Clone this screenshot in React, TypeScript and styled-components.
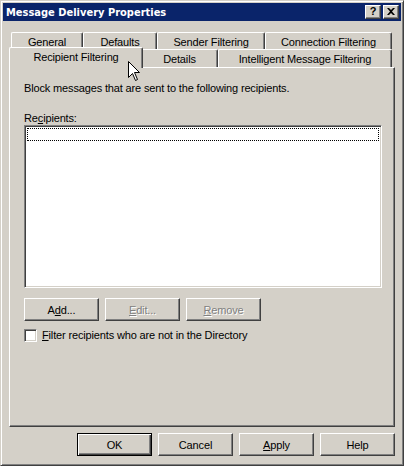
import styled, { createGlobalStyle } from "styled-components";

const GlobalStyle = createGlobalStyle`
  html, body {
    margin: 0;
    padding: 0;
    background: #d4d0c8;
  }
  * {
    box-sizing: border-box;
  }
`;

const FACE = "#d4d0c8";
const SHADOW = "#808080";
const DARK = "#404040";
const FONT = `"Liberation Sans", Arial, sans-serif`;

export default function App() {
  return (
    <>
      <GlobalStyle />
      <Window>
        <TitleBar>
          <Title>Message Delivery Properties</Title>
          <CaptionButtons>
            <CaptionButton aria-label="Help">?</CaptionButton>
            <CaptionButton aria-label="Close">
              <svg width="8" height="7" viewBox="0 0 8 7">
                <path d="M0 0 L2 0 L4 2 L6 0 L8 0 L5 3.5 L8 7 L6 7 L4 5 L2 7 L0 7 L3 3.5 Z" fill="#000" />
              </svg>
            </CaptionButton>
          </CaptionButtons>
        </TitleBar>

        <Body>
          <TabStrip>
            <TabRow>
              <Tab $w={72}>General</Tab>
              <Tab $w={74}>Defaults</Tab>
              <Tab $w={108}>Sender Filtering</Tab>
              <Tab $w={127}>Connection Filtering</Tab>
            </TabRow>
            <TabRow>
              <Tab $w={130} $active>Recipient Filtering</Tab>
              <Tab $w={77}>Details</Tab>
              <Tab $w={174}>Intelligent Message Filtering</Tab>
            </TabRow>
          </TabStrip>

          <Panel>
            <Intro>Block messages that are sent to the following recipients.</Intro>
            <FieldLabel>
              Re<u>c</u>ipients:
            </FieldLabel>
            <ListBox>
              <FocusRow />
            </ListBox>
            <ButtonRow>
              <Button>
                A<u>d</u>d...
              </Button>
              <Button disabled>
                <u>E</u>dit...
              </Button>
              <Button disabled>
                <u>R</u>emove
              </Button>
            </ButtonRow>
            <CheckRow>
              <CheckBox />
              <span>
                <u>F</u>ilter recipients who are not in the Directory
              </span>
            </CheckRow>
          </Panel>

          <DialogButtons>
            <Button $default>OK</Button>
            <Button>Cancel</Button>
            <Button>
              <u>A</u>pply
            </Button>
            <Button>Help</Button>
          </DialogButtons>
        </Body>

        <Pointer width="13" height="21" viewBox="0 0 13 21">
          <path
            d="M0.5 0.5 L0.5 16.5 L4.5 12.5 L7.5 19.5 L9.5 18.5 L6.5 11.5 L11.5 11.5 Z"
            fill="#fff"
            stroke="#000"
            strokeWidth="1"
          />
        </Pointer>
      </Window>
    </>
  );
}

const Window = styled.div`
  position: relative;
  width: 404px;
  height: 466px;
  display: flex;
  flex-direction: column;
  padding: 2px;
  background: ${FACE};
  border: 1px solid;
  border-color: ${FACE} ${DARK} ${DARK} ${FACE};
  box-shadow: inset 1px 1px #fff, inset -1px -1px ${SHADOW};
  font-family: ${FONT};
  font-size: 11px;
  letter-spacing: -0.15px;
  color: #000;
  overflow: hidden;
`;

const TitleBar = styled.div`
  height: 18px;
  display: flex;
  align-items: center;
  justify-content: space-between;
  background: #0a246a;
  padding: 0 2px 0 3px;
`;

const Title = styled.span`
  color: #fff;
  font-family: "DejaVu Sans Condensed", "DejaVu Sans", sans-serif;
  font-stretch: condensed;
  font-weight: bold;
  font-size: 11px;
  letter-spacing: 0;
`;

const CaptionButtons = styled.div`
  display: flex;
  gap: 2px;
`;

const CaptionButton = styled.div`
  width: 16px;
  height: 14px;
  display: flex;
  align-items: center;
  justify-content: center;
  background: ${FACE};
  border: 1px solid;
  border-color: #fff ${DARK} ${DARK} #fff;
  box-shadow: inset -1px -1px ${SHADOW};
  font-weight: bold;
  font-size: 11px;
  line-height: 1;
  padding-bottom: 1px;
`;

const Body = styled.div`
  flex: 1;
  display: flex;
  flex-direction: column;
  padding: 11px 6px 7px 6px;
`;

const TabStrip = styled.div`
  display: flex;
  flex-direction: column;
`;

const TabRow = styled.div`
  height: 17px;
  display: flex;
  padding-left: 2px;

  & + & {
    height: 18px;
  }
`;

const Tab = styled.div<{ $w: number; $active?: boolean }>`
  position: relative;
  width: ${(p) => p.$w + (p.$active ? 4 : 0)}px;
  margin: ${(p) => (p.$active ? "-2px -2px -1px -2px" : "0")};
  z-index: ${(p) => (p.$active ? 2 : 0)};
  display: flex;
  align-items: center;
  justify-content: center;
  padding-top: ${(p) => (p.$active ? "0" : "1px")};
  padding-bottom: ${(p) => (p.$active ? "3px" : "0")};
  background: ${FACE};
  border-top: 1px solid #fff;
  border-left: 1px solid #fff;
  border-right: 1px solid ${DARK};
  border-top-left-radius: 2px;
  border-top-right-radius: 2px;
  box-shadow: inset -1px 0 ${SHADOW};
  white-space: nowrap;
`;

const Panel = styled.div`
  height: 360px;
  display: flex;
  flex-direction: column;
  align-items: flex-start;
  padding: 14px 12px 0 14px;
  background: ${FACE};
  border: 1px solid;
  border-color: #fff ${DARK} ${DARK} #fff;
  box-shadow: inset -1px -1px ${SHADOW};
`;

const Intro = styled.div`
  line-height: 13px;
`;

const FieldLabel = styled.div`
  margin-top: 17px;
  line-height: 13px;
`;

const ListBox = styled.div`
  width: 358px;
  height: 163px;
  padding: 2px;
  background: #fff;
  border: 1px solid;
  border-color: ${SHADOW} #fff #fff ${SHADOW};
  box-shadow: inset 1px 1px ${DARK}, inset -1px -1px ${FACE};
`;

const FocusRow = styled.div`
  height: 13px;
  border: 1px dotted #000;
`;

const ButtonRow = styled.div`
  display: flex;
  gap: 6px;
  margin-top: 10px;
`;

const Button = styled.button<{ $default?: boolean }>`
  width: 75px;
  height: 23px;
  padding: 0;
  font-family: ${FONT};
  font-size: 11px;
  letter-spacing: -0.15px;
  color: #000;
  background: ${FACE};
  border: 1px solid;
  border-color: ${(p) => (p.$default ? "#000" : `#fff ${DARK} ${DARK} #fff`)};
  box-shadow: ${(p) =>
    p.$default
      ? `inset 1px 1px #fff, inset -1px -1px ${DARK}, inset -2px -2px ${SHADOW}`
      : `inset -1px -1px ${SHADOW}`};

  &:disabled {
    color: ${SHADOW};
    text-shadow: 1px 1px #fff;
  }
`;

const CheckRow = styled.label`
  display: flex;
  align-items: center;
  gap: 5px;
  margin-top: 8px;
  line-height: 13px;
`;

const CheckBox = styled.span`
  width: 13px;
  height: 13px;
  background: #fff;
  border: 1px solid;
  border-color: ${SHADOW} #fff #fff ${SHADOW};
  box-shadow: inset 1px 1px ${DARK}, inset -1px -1px ${FACE};
`;

const DialogButtons = styled.div`
  display: flex;
  justify-content: flex-end;
  gap: 6px;
  margin-top: 6px;
`;

const Pointer = styled.svg`
  position: absolute;
  left: 127px;
  top: 60px;
  z-index: 5;
  pointer-events: none;
`;
